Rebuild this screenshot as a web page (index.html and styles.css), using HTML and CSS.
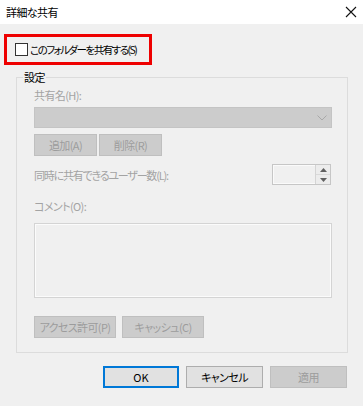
FILE: index.html
```html
<!DOCTYPE html>
<html lang="ja">
<head>
<meta charset="utf-8">
<link rel="stylesheet" href="styles.css">
</head>
<body>
<div class="dialog">
  <div class="titlebar">
    <span class="title">詳細な共有</span>
    <svg class="close" width="12" height="12" viewBox="0 0 12 12"><path d="M1 1 L11 11 M11 1 L1 11" stroke="#111" stroke-width="1.1" fill="none"/></svg>
  </div>
  <div class="body">
    <div class="share-row">
      <span class="checkbox"></span>
      <span class="share-text">このフォルダーを共有する(S)</span>
    </div>
    <fieldset class="group">
      <legend class="legend">設定</legend>
      <div class="label l-name">共有名(H):</div>
      <div class="combo">
        <svg class="chev" width="10" height="6" viewBox="0 0 10 6"><path d="M0.5 0.5 L5 5 L9.5 0.5" stroke="#a8a8a8" stroke-width="1" fill="none"/></svg>
      </div>
      <div class="btnrow r1">
        <div class="btn dis w63">追加(A)</div>
        <div class="btn dis w63">削除(R)</div>
      </div>
      <div class="users">
        <div class="label users-label">同時に共有できるユーザー数(L):</div>
        <div class="spin">
          <div class="spin-field"></div>
          <div class="spin-btns">
            <div class="spin-up"><svg width="7" height="4" viewBox="0 0 7 4"><path d="M0 4 L3.5 0 L7 4 Z" fill="#606060"/></svg></div>
            <div class="spin-down"><svg width="7" height="4" viewBox="0 0 7 4"><path d="M0 0 L3.5 4 L7 0 Z" fill="#606060"/></svg></div>
          </div>
        </div>
      </div>
      <div class="label l-comment">コメント(O):</div>
      <div class="comment"></div>
      <div class="btnrow r2">
        <div class="btn dis w82">アクセス許可(P)</div>
        <div class="btn dis w82 gap6">キャッシュ(C)</div>
      </div>
    </fieldset>
    <div class="footer">
      <div class="btn ok">OK</div>
      <div class="btn normal">キャンセル</div>
      <div class="btn dis apply">適用</div>
    </div>
  </div>
</div>
</body>
</html>
```
FILE: styles.css
```css
* { box-sizing: border-box; }
html, body { margin: 0; padding: 0; }
body {
  width: 363px;
  height: 406px;
  background: #f0f0f0;
  font-family: "Noto Sans CJK JP", "Noto Sans", sans-serif;
  font-size: 11px;
  font-feature-settings: "palt";
  letter-spacing: -0.6px;
  color: #000;
  overflow: hidden;
  white-space: nowrap;
}
.dialog { width: 363px; height: 406px; }
.titlebar {
  height: 24px;
  background: #fff;
  display: flex;
  align-items: center;
  justify-content: space-between;
  padding: 0 6px 0 6px;
}
.title { font-size: 11px; color: #000; }
.body { display: flex; flex-direction: column; }
.share-row {
  margin: 10px 0 0 4px;
  width: 148px;
  height: 31px;
  border: 3px solid #ee0000;
  display: flex;
  align-items: center;
  padding-left: 8px;
}
.checkbox {
  width: 13px;
  height: 13px;
  border: 1px solid #333;
  background: #fff;
  flex: none;
}
.share-text { margin-left: 2px; line-height: 14px; font-size: 10.5px; letter-spacing: -1.5px; }
.group {
  margin: 5px 0 0 16px;
  width: 332px;
  height: 283px;
  border: 1px solid #dcdcdc;
  padding: 0 0 0 17px;
  display: flex;
  flex-direction: column;
  min-width: 0;
}
.legend {
  padding: 0 1px;
  margin-left: -11px;
  line-height: 14px;
  color: #000;
}
.label { color: #a3a3a3; line-height: 14px; }
.users-label { letter-spacing: -1.2px; }
.l-name { margin-top: 4px; }
.combo {
  margin-top: 5px;
  width: 298px;
  height: 21px;
  background: #cccccc;
  border: 1px solid #c4c4c4;
  display: flex;
  align-items: center;
  justify-content: flex-end;
  padding-right: 4px;
}
.btnrow { display: flex; gap: 2px; }
.r1 { margin-top: 6px; }
.btn {
  height: 22px;
  display: flex;
  align-items: center;
  justify-content: center;
}
.dis { background: #cccccc; border: 1px solid #bfbfbf; color: #9c9c9c; }
.w63 { width: 63px; }
.w82 { width: 82px; }
.gap6 { margin-left: 4px; }
.users {
  margin-top: 8px;
  width: 297px;
  display: flex;
  justify-content: space-between;
  align-items: center;
}
.spin { flex: none; width: 59px; height: 21px; display: flex; border: 1px solid #c6c6c6; background: #f0f0f0; box-shadow: inset 0 0 0 1px #fafafa; }
.spin-field { width: 42px; }
.spin-btns { width: 15px; display: flex; flex-direction: column; border-left: 1px solid #d4d4d4; }
.spin-up, .spin-down { flex: 1; display: flex; align-items: center; justify-content: center; background: #ececec; }
.spin-up { border-bottom: 1px solid #d9d9d9; }
.l-comment { margin-top: 14px; }
.comment {
  margin-top: 10px;
  width: 298px;
  height: 75px;
  border: 1px solid #d4d4d4;
  box-shadow: inset 0 0 0 1px #fbfbfb;
}
.r2 { margin-top: 18px; }
.footer {
  margin: 13px 0 0 103px;
  display: flex;
  gap: 7px;
}
.ok { width: 76px; background: #e1e1e1; border: 2px solid #0078d7; letter-spacing: 0; }
.normal { width: 77px; background: #e1e1e1; border: 1px solid #adadad; }
.apply { width: 77px; }
```
